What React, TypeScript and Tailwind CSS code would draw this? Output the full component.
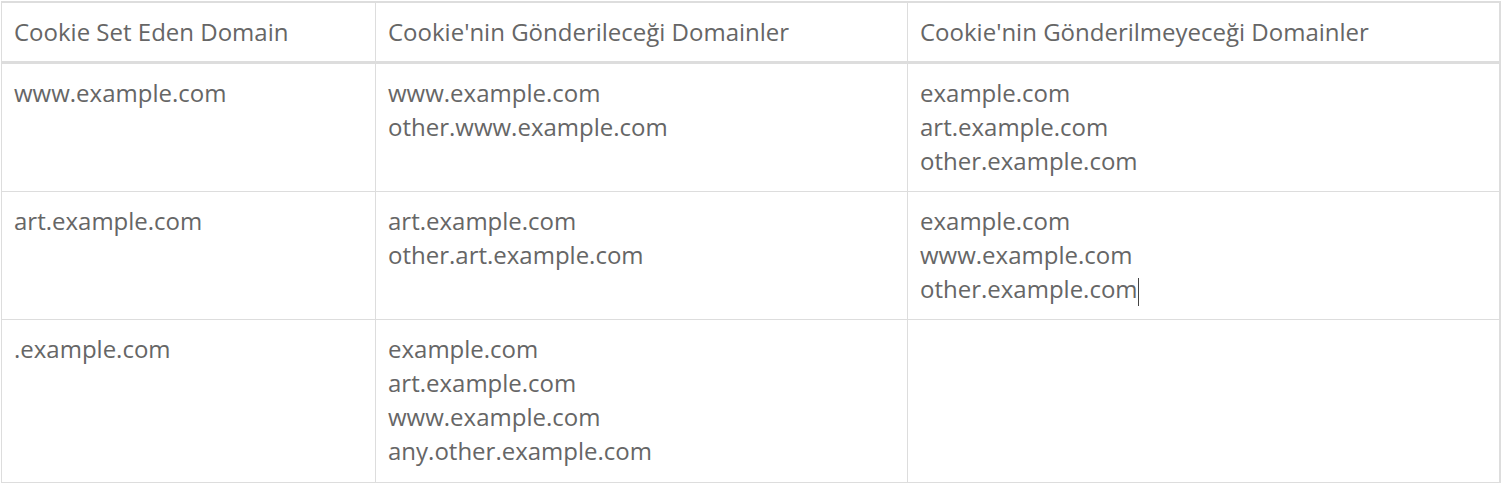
const rows: string[][][] = [
  [["www.example.com"], ["www.example.com", "other.www.example.com"], ["example.com", "art.example.com", "other.example.com"]],
  [["art.example.com"], ["art.example.com", "other.art.example.com"], ["example.com", "www.example.com", "other.example.com"]],
  [[".example.com"], ["example.com", "art.example.com", "www.example.com", "any.other.example.com"], []],
];

const headers = ["Cookie Set Eden Domain", "Cookie'nin Gönderileceği Domainler", "Cookie'nin Gönderilmeyeceği Domainler"];

export default function App() {
  return (
    <div className="w-full h-[486px] bg-white pt-px pl-px" style={{ fontFamily: '"Open Sans", sans-serif' }}>
      <table className="w-[1500px] border-collapse table-fixed text-[24px] leading-[34px] text-[#666] border-t-2 border-r-2 border-l border-b border-[#ddd]">
        <colgroup>
          <col className="w-[374px]" />
          <col className="w-[532px]" />
          <col />
        </colgroup>
        <thead>
          <tr className="border-b-[3px] border-[#ddd]">
            {headers.map((h) => (
              <th key={h} className="text-left font-normal px-3 py-3 border-r border-[#ddd] align-top">
                {h}
              </th>
            ))}
          </tr>
        </thead>
        <tbody>
          {rows.map((row, ri) => (
            <tr key={ri} className="border-b border-[#ddd]">
              {row.map((cell, ci) => (
                <td key={ci} className={`px-3 pt-3 border-r border-[#ddd] align-top ${ri === 2 ? "pb-[14px]" : "pb-[13px]"}`}>
                  {cell.map((line, li) => (
                    <div key={li}>
                      {line}
                      {ri === 1 && ci === 2 && li === 2 && (
                        <span className="inline-block w-px h-[28px] bg-[#444] align-middle" />
                      )}
                    </div>
                  ))}
                </td>
              ))}
            </tr>
          ))}
        </tbody>
      </table>
    </div>
  );
}
